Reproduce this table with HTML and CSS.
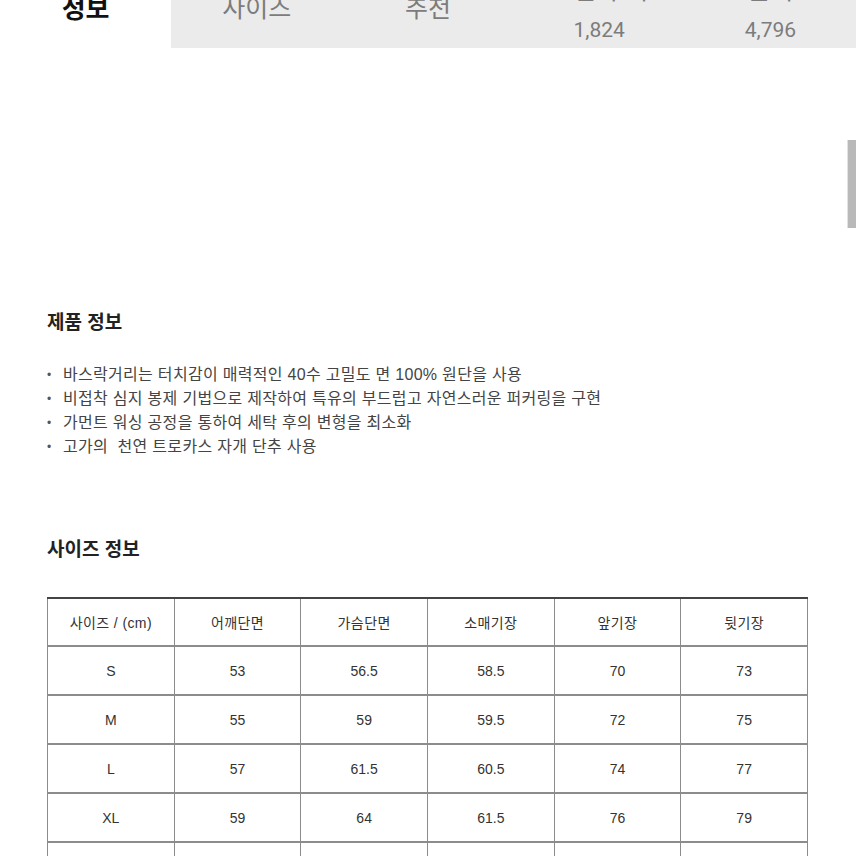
FILE: index.html
```html
<!DOCTYPE html>
<html lang="ko">
<head>
<meta charset="utf-8">
<title>제품 정보</title>
<link rel="stylesheet" href="styles.css">
</head>
<body>
<div class="tabbar">
  <div class="tabs">
    <div class="tab tab-active"><span class="tab-label">정보</span></div>
    <div class="tab"><span class="tab-label">사이즈</span></div>
    <div class="tab"><span class="tab-label">추천</span></div>
    <div class="tab"><span class="tab-label">스냅 후기</span><span class="tab-count">1,824</span></div>
    <div class="tab"><span class="tab-label">문의</span><span class="tab-count">4,796</span></div>
  </div>
</div>
<div class="scroll-thumb"></div>
<main class="content">
  <h2 class="heading heading-product">제품 정보</h2>
  <ul class="bullets">
    <li>바스락거리는 터치감이 매력적인 40수 고밀도 면 100% 원단을 사용</li>
    <li>비접착 심지 봉제 기법으로 제작하여 특유의 부드럽고 자연스러운 퍼커링을 구현</li>
    <li>가먼트 워싱 공정을 통하여 세탁 후의 변형을 최소화</li>
    <li>고가의&nbsp; 천연 트로카스 자개 단추 사용</li>
  </ul>
  <h2 class="heading heading-size">사이즈 정보</h2>
  <table class="size-table">
    <thead>
      <tr><th>사이즈 / (cm)</th><th>어깨단면</th><th>가슴단면</th><th>소매기장</th><th>앞기장</th><th>뒷기장</th></tr>
    </thead>
    <tbody>
      <tr><td>S</td><td>53</td><td>56.5</td><td>58.5</td><td>70</td><td>73</td></tr>
      <tr><td>M</td><td>55</td><td>59</td><td>59.5</td><td>72</td><td>75</td></tr>
      <tr><td>L</td><td>57</td><td>61.5</td><td>60.5</td><td>74</td><td>77</td></tr>
      <tr><td>XL</td><td>59</td><td>64</td><td>61.5</td><td>76</td><td>79</td></tr>
      <tr><td></td><td></td><td></td><td></td><td></td><td></td></tr>
    </tbody>
  </table>
</main>
</body>
</html>
```

FILE: styles.css
```css
html, body {
  margin: 0;
  padding: 0;
  background: #ffffff;
}
body {
  width: 856px;
  height: 856px;
  overflow: hidden;
  font-family: "Liberation Sans", "Noto Sans CJK KR", sans-serif;
  color: #333;
}
.tabbar {
  height: 48px;
  overflow: hidden;
}
.tabs {
  display: flex;
  height: 80px;
  margin-top: -31px;
}
.tab {
  flex: 1 1 0;
  display: flex;
  flex-direction: column;
  align-items: center;
  justify-content: center;
  background: #ebebeb;
  font-family: Roboto, "Noto Sans CJK KR", sans-serif;
  color: #7c7c7c;
}
.tab-active {
  background: #ffffff;
}
.tab-label {
  font-size: 25px;
  line-height: 30px;
}
.tab-active .tab-label {
  font-weight: 700;
  color: #111;
  font-size: 26px;
}
.tab-count {
  font-size: 21px;
  line-height: 24px;
  margin-top: 12px;
}
.scroll-thumb {
  position: absolute;
  top: 140px;
  right: 0;
  width: 8px;
  height: 88px;
  background: #b9b9b9;
  border-left: 1px solid #e2e2e2;
}
.content {
  padding-left: 47px;
}
.heading {
  margin: 0;
  font-size: 19px;
  line-height: 26px;
  font-weight: 700;
  color: #222;
  font-family: "Noto Sans CJK KR", sans-serif;
}
.heading-product {
  margin-top: 260px;
}
.bullets {
  list-style: none;
  margin: 29px 0 0 0;
  padding: 0;
}
.bullets li {
  display: flex;
  font-size: 16px;
  line-height: 24px;
  letter-spacing: 0.3px;
  color: #444;
}
.bullets li::before {
  content: "•";
  width: 16px;
  flex: none;
  color: #555;
  font-size: 12px;
}
.heading-size {
  margin-top: 76px;
}
.size-table {
  margin-top: 36px;
  width: 761px;
  table-layout: fixed;
  border-collapse: collapse;
  border-top: 2px solid #444;
}
.size-table th,
.size-table td {
  border: 1px solid #8c8c8c;
  border-top: 2px solid #8c8c8c;
  text-align: center;
  vertical-align: middle;
  font-size: 14px;
  color: #333;
  font-weight: 400;
  padding: 0;
}
.size-table th {
  height: 46px;
  border-top: 2px solid #444;
  letter-spacing: 0.4px;
}
.size-table td {
  height: 47px;
}
```
